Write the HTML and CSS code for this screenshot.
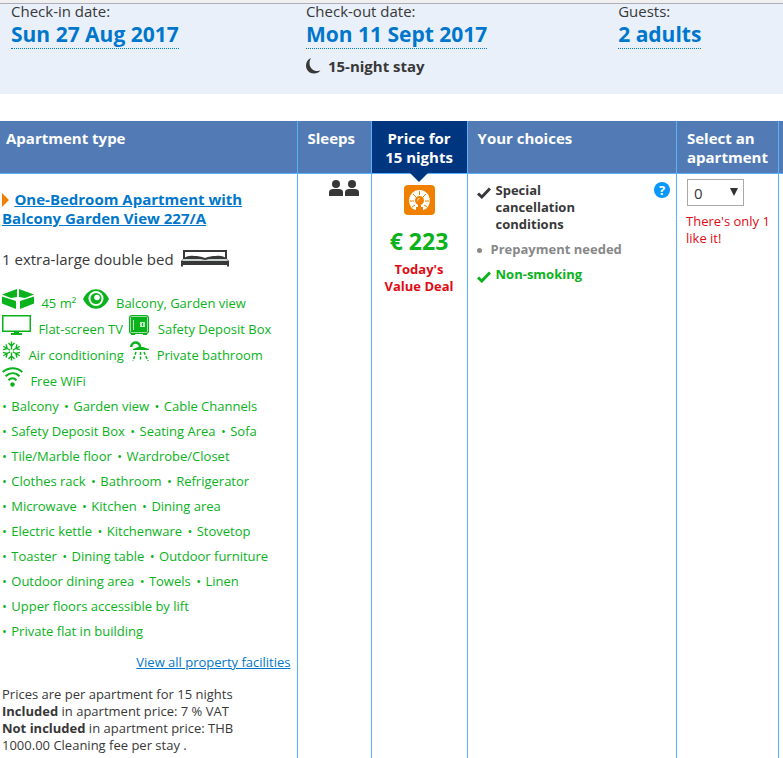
FILE: index.html
```html
<!DOCTYPE html>
<html lang="en">
<head>
    <meta charset="UTF-8">
    <meta name="viewport" content="width=device-width, initial-scale=1.0">
    <title>Apartment availability</title>
    <link rel="stylesheet" href="styles.css">
</head>
<body>
    <!-- Search summary -->
    <section class="summary">
        <div class="summary-item">
            <p class="summary-label">Check-in date:</p>
            <a class="summary-value" href="#checkin">Sun 27 Aug 2017</a>
        </div>
        <div class="summary-item">
            <p class="summary-label">Check-out date:</p>
            <a class="summary-value" href="#checkout">Mon 11 Sept 2017</a>
            <p class="stay">
                <svg width="15" height="16" viewBox="0 0 15 16" aria-hidden="true"><path fill="#383838" d="M5 0C1.800 1.400 0 4.300 0 7.500 0 12 3.500 15.500 8 15.500c2.700 0 5-1 6.500-3-1 .3-2 .5-3 .5C6.800 13 3.500 9.500 3.500 5.200 3.500 3.200 4 1.500 5 0z"/></svg>
                15-night stay
            </p>
        </div>
        <div class="summary-item">
            <p class="summary-label">Guests:</p>
            <a class="summary-value" href="#guests">2 adults</a>
        </div>
    </section>

    <!-- Room table -->
    <table class="rooms">
        <colgroup>
            <col class="col-type">
            <col class="col-sleeps">
            <col class="col-price">
            <col>
            <col class="col-select">
            <col class="col-more">
        </colgroup>
        <thead>
            <tr>
                <th class="type-head">Apartment type</th>
                <th>Sleeps</th>
                <th class="price-head">Price for<br>15 nights</th>
                <th>Your choices</th>
                <th>Select an apartment</th>
                <th></th>
            </tr>
        </thead>
        <tbody>
            <tr>
                <td class="type">
                    <svg class="arrow" width="7" height="14" viewBox="0 0 7 14" aria-hidden="true"><path fill="#f08000" d="M0 0l7 7-7 7z"/></svg>
                    <a class="room-name" href="#room">One-Bedroom Apartment with Balcony Garden View 227/A</a>
                    <p class="bed">1 extra-large double bed
                        <svg width="48" height="17" viewBox="0 0 48 17" aria-hidden="true">
                            <path fill="#383838" d="M2 0h44v10H2z"/>
                            <path fill="#fff" d="M4 2h40v6H4z"/>
                            <path fill="#383838" d="M2 9c3-3 7-3.500 11-3 4 0 7 .5 11 2 4-1.500 7-2 11-2 4-.5 8 0 11 3l2 2v5.500h-2V15H2v1.500H0V11z"/>
                            <path fill="#c9d3d0" d="M2 9h18l4 1 4-1h18l1 2H1z"/>
                        </svg>
                    </p>

                    <p class="features">
                        <svg width="32" height="20" viewBox="0 0 32 20" aria-hidden="true"><path fill="#0ab21b" d="M15 0v8L9 9 0 5.500zM17 0l15 5.500L23 9l-6-1zM0 7.500l14 4.500v8L0 14.500zM32 7.500v7L18 20v-8z"/></svg>
                        <span>45 m²</span>
                        <svg width="26" height="20" viewBox="0 0 26 20" aria-hidden="true"><path fill="#0ab21b" d="M0 10C6-3 20-3 26 10 20 23 6 23 0 10z"/><circle cx="13" cy="9.500" r="7.500" fill="#fff"/><circle cx="13" cy="9.500" r="5.500" fill="#0ab21b"/><circle cx="14" cy="8.500" r="2.800" fill="#fff"/></svg>
                        <span>Balcony, Garden view</span>
                        <br>
                        <svg width="29" height="20" viewBox="0 0 29 20" aria-hidden="true"><path fill="#0ab21b" fill-rule="evenodd" d="M0 0h29v17H17v1h3v2H9v-2h3v-1H0zM1.500 1.500v14h26v-14z"/></svg>
                        <span>Flat-screen TV</span>
                        <svg width="20" height="20" viewBox="0 0 20 20" aria-hidden="true"><rect width="20" height="19" rx="3" fill="#0ab21b"/><path fill="#0ab21b" d="M2 18h4v2H2zM14 18h4v2h-4z"/><rect x="1.500" y="1.500" width="17" height="16" rx="1" fill="none" stroke="#9fdfa5"/><path fill="#bfe9c3" d="M4 5h1v10H4zM11 7h5v5h-5z"/><path fill="#0ab21b" d="M13 8h1v3h-1z"/></svg>
                        <span class="gap">Safety Deposit Box</span>
                        <br>
                        <svg width="19" height="20" viewBox="0 0 19 20" aria-hidden="true"><g fill="none" stroke="#0ab21b" stroke-width="1.400"><g id="arm"><path d="M9.500 8.500V.5M6.500 2l3 3 3-3"/></g><use href="#arm" transform="rotate(60 9.500 10)"/><use href="#arm" transform="rotate(120 9.500 10)"/><use href="#arm" transform="rotate(180 9.500 10)"/><use href="#arm" transform="rotate(240 9.500 10)"/><use href="#arm" transform="rotate(300 9.500 10)"/></g></svg>
                        <span>Air conditioning</span>
                        <svg width="19" height="20" viewBox="0 0 19 20" aria-hidden="true"><path fill="none" stroke="#0ab21b" stroke-width="2.500" d="M1.200 6C1.500 0 10 0 10 6"/><path fill="#0ab21b" d="M3 8l5-2h5l6 2v1H3z"/><path fill="none" stroke="#0ab21b" stroke-width="1.500" stroke-dasharray="3 1.500" d="M6 11L3 20M10.500 11v9M14 11l4 9"/></svg>
                        <span>Private bathroom</span>
                        <br>
                        <svg width="21" height="20" viewBox="0 0 21 20" aria-hidden="true"><g fill="none" stroke="#0ab21b" stroke-width="2"><path d="M.7 5c6-5 14-5 19.600 0M3.500 9.200c4.500-4 10-4 14 0M6.500 13.200c2.500-2.500 5.500-2.500 8 0"/></g><circle cx="10.500" cy="17.500" r="2.200" fill="#0ab21b"/></svg>
                        <span>Free WiFi</span>
                    </p>

                    <ul class="facilities">
                        <li>Balcony</li> <li>Garden view</li> <li>Cable Channels</li><br>
                        <li>Safety Deposit Box</li> <li>Seating Area</li> <li>Sofa</li><br>
                        <li>Tile/Marble floor</li> <li>Wardrobe/Closet</li><br>
                        <li>Clothes rack</li> <li>Bathroom</li> <li>Refrigerator</li><br>
                        <li>Microwave</li> <li>Kitchen</li> <li>Dining area</li><br>
                        <li>Electric kettle</li> <li>Kitchenware</li> <li>Stovetop</li><br>
                        <li>Toaster</li> <li>Dining table</li> <li>Outdoor furniture</li><br>
                        <li>Outdoor dining area</li> <li>Towels</li> <li>Linen</li><br>
                        <li>Upper floors accessible by lift</li><br>
                        <li>Private flat in building</li>
                    </ul>

                    <p class="view-all"><a href="#facilities">View all property facilities</a></p>

                    <p class="price-info">
                        Prices are per apartment for 15 nights<br>
                        <b>Included</b> in apartment price: 7 % VAT<br>
                        <b>Not included</b> in apartment price: THB<br>
                        1000.00 Cleaning fee per stay .
                    </p>
                </td>
                <td class="sleeps">
                    <svg width="30" height="16" viewBox="0 0 30 16" role="img" aria-label="2 guests"><g fill="#383838"><circle cx="7" cy="4" r="4"/><path d="M0 16v-4c0-2 2-3 4-3h6c2 0 4 1 4 3v4z"/><circle cx="23" cy="4" r="4"/><path d="M16 16v-4c0-2 2-3 4-3h6c2 0 4 1 4 3v4z"/></g></svg>
                </td>
                <td class="price">
                    <svg class="deal" width="31" height="30" viewBox="0 0 31 30" aria-hidden="true">
                        <rect width="31" height="30" rx="4" fill="#f08000"/>
                        <path fill="#fff" d="M9 24C2 18 5 5 15.500 5S29 18 22 24l-3 1v-3h-7v3z"/>
                        <g fill="none" stroke="#f08000"><path d="M15.500 6v4M9 9l3 3M22 9l-3 3M6 16h4M25 16h-4M8 22l3-2M23 22l-3-2"/></g>
                        <circle cx="15.500" cy="15.500" r="4.500" fill="#f08000"/>
                        <path fill="#f08000" d="M14 19h3v3h2v4h-7v-4h2z"/>
                        <path fill="none" stroke="#fff" d="M13.500 15.500c0-1 1-2 2-2"/>
                    </svg>
                    <strong class="amount">€ 223</strong>
                    <p class="deal-text">Today's<br>Value Deal</p>
                </td>
                <td class="choices">
                    <div class="choices-row">
                        <ul class="policies">
                            <li class="policy">
                                <svg width="14" height="12" viewBox="0 0 14 12" aria-hidden="true"><path fill="none" stroke="#383838" stroke-width="3" d="M1 6.500l3.800 3.500L13 1.500"/></svg>
                                <span>Special<br>cancellation<br>conditions</span>
                            </li>
                            <li class="policy prepay">
                                <svg width="5" height="5" viewBox="0 0 5 5" aria-hidden="true"><circle cx="2.500" cy="2.500" r="2.500" fill="#888"/></svg>
                                <span>Prepayment needed</span>
                            </li>
                            <li class="policy smoke">
                                <svg width="14" height="12" viewBox="0 0 14 12" aria-hidden="true"><path fill="none" stroke="#0ab21b" stroke-width="3" d="M1 6.500l3.800 3.500L13 1.500"/></svg>
                                <span>Non-smoking</span>
                            </li>
                        </ul>
                        <button class="help" type="button" aria-label="Show conditions">?</button>
                    </div>
                </td>
                <td class="select">
                    <div class="select-box">
                        <select aria-label="Select an apartment">
                            <option>0</option>
                            <option>1</option>
                        </select>
                        <svg class="caret" width="8" height="8" viewBox="0 0 8 8" aria-hidden="true"><path fill="#333" d="M0 0h8L4 8z"/></svg>
                    </div>
                    <p class="scarce">There's only 1<br>like it!</p>
                </td>
                <td></td>
            </tr>
        </tbody>
    </table>
</body>
</html>
```
FILE: styles.css
```css
* {
    box-sizing: border-box;
    margin: 0;
    padding: 0;
}
body {
    background-color: #fff;
    border-top: 3px solid #f0f0f0;
    font-family: "Open Sans", "Noto Sans", sans-serif;
    font-size: 13px;
    line-height: 17px;
    color: #383838;
}
a {
    color: #0077cc;
}
ul {
    list-style: none;
}

/* search summary */
.summary {
    display: grid;
    grid-template-columns: 34fr 36fr 19fr;
    height: 91px;
    padding-left: 11px;
    border-top: 1px solid #b0adb8;
    background-color: #e9f0fa;
}
.summary-label {
    margin-bottom: 2px;
    font-size: 15px;
    line-height: 14px;
}
.summary-value {
    display: inline-block;
    border-bottom: 1px dotted #0077cc;
    font-size: 21px;
    font-weight: bold;
    line-height: 28px;
    text-decoration: none;
}
.stay {
    display: flex;
    align-items: center;
    gap: 7px;
    margin-top: 7px;
    font-size: 15px;
    font-weight: bold;
    line-height: 20px;
}

/* room table */
.rooms {
    width: 100%;
    margin-top: 27px;
    border-collapse: separate;
    border-spacing: 0;
    table-layout: fixed;
}
.col-type {
    width: 38%;
}
.col-sleeps {
    width: 74px;
}
.col-price {
    width: 96px;
}
.col-select {
    width: 102px;
}
.col-more {
    width: 4px;
}
.rooms th,
.rooms td {
    border-right: 1px solid #57b3fa;
    vertical-align: top;
}
.rooms th:last-child,
.rooms td:last-child {
    border-right: 0;
}
.rooms th {
    height: 53px;
    padding: 8px 0 6px 10px;
    border-bottom: 1px solid #57b3fa;
    background-color: #527bb5;
    color: #fff;
    font-size: 15px;
    line-height: 19px;
    text-align: left;
}
.rooms th:last-child {
    padding: 0;
}
.rooms .type-head {
    padding-left: 6px;
}
.rooms .price-head {
    position: relative;
    padding-left: 0;
    background-color: #003580;
    text-align: center;
}
.price-head::after {
    content: "";
    position: absolute;
    top: 100%;
    left: 50%;
    margin-left: -9px;
    border: 9px solid transparent;
    border-top-color: #003580;
    border-bottom: 0;
}

/* apartment type */
.type {
    padding: 16px 6px 4px 2px;
}
.room-name {
    font-size: 15px;
    font-weight: bold;
    line-height: 19px;
}
.arrow {
    margin-right: 2px;
    vertical-align: -2px;
}
.bed {
    margin-top: 21px;
    font-size: 15px;
    line-height: 20px;
}
.bed svg {
    margin-left: 4px;
    vertical-align: -2px;
}
.features {
    margin-top: 21px;
    color: #0ab21b;
    line-height: 26px;
    white-space: nowrap;
}
.features svg {
    margin-top: -2px;
    vertical-align: -1px;
}
.features span {
    margin: 0 3px 0 4px;
}
.features .gap {
    margin-left: 5px;
}
.facilities {
    color: #0ab21b;
    line-height: 25px;
    white-space: nowrap;
}
.facilities li {
    display: inline-block;
    margin-right: 2px;
}
.facilities li::before {
    content: "• ";
    margin-right: 1px;
}
.view-all {
    margin-top: 10px;
    text-align: right;
}
.price-info {
    margin-top: 15px;
}

/* other cells */
.sleeps {
    padding: 6px 12px 0 0;
    text-align: right;
}
.price {
    padding-top: 11px;
    text-align: center;
}
.deal {
    display: block;
    margin: 0 auto;
}
.amount {
    display: block;
    margin-top: 13px;
    color: #0ab21b;
    font-size: 23px;
    line-height: 26px;
}
.deal-text {
    margin-top: 7px;
    color: #e00b14;
    font-weight: bold;
}
.choices {
    padding: 8px 6px 0 9px;
}
.choices-row {
    display: flex;
    justify-content: space-between;
    align-items: flex-start;
}
.policy {
    display: flex;
    align-items: flex-start;
    gap: 5px;
    margin-bottom: 8px;
    font-weight: bold;
}
.policy svg {
    margin-top: 5px;
}
.prepay {
    gap: 9px;
    color: #888;
}
.prepay svg {
    margin-top: 7px;
}
.smoke {
    color: #0ab21b;
}
.help {
    width: 16px;
    height: 16px;
    border: 0;
    border-radius: 50%;
    background-color: #0896ff;
    color: #fff;
    font: bold 13px/16px "Open Sans", sans-serif;
    cursor: pointer;
}
.select {
    padding: 5px 0 0 9px;
}
.select-box {
    position: relative;
    width: 57px;
    margin-left: 1px;
}
.select-box select {
    display: block;
    width: 100%;
    height: 27px;
    padding-left: 6px;
    border: 1px solid #a9a9a9;
    appearance: none;
    background-color: #fff;
    color: #383838;
    font: 15px "Open Sans", sans-serif;
}
.caret {
    position: absolute;
    top: 9px;
    right: 6px;
    pointer-events: none;
}
.scarce {
    margin-top: 7px;
    color: #e00b14;
}
```
